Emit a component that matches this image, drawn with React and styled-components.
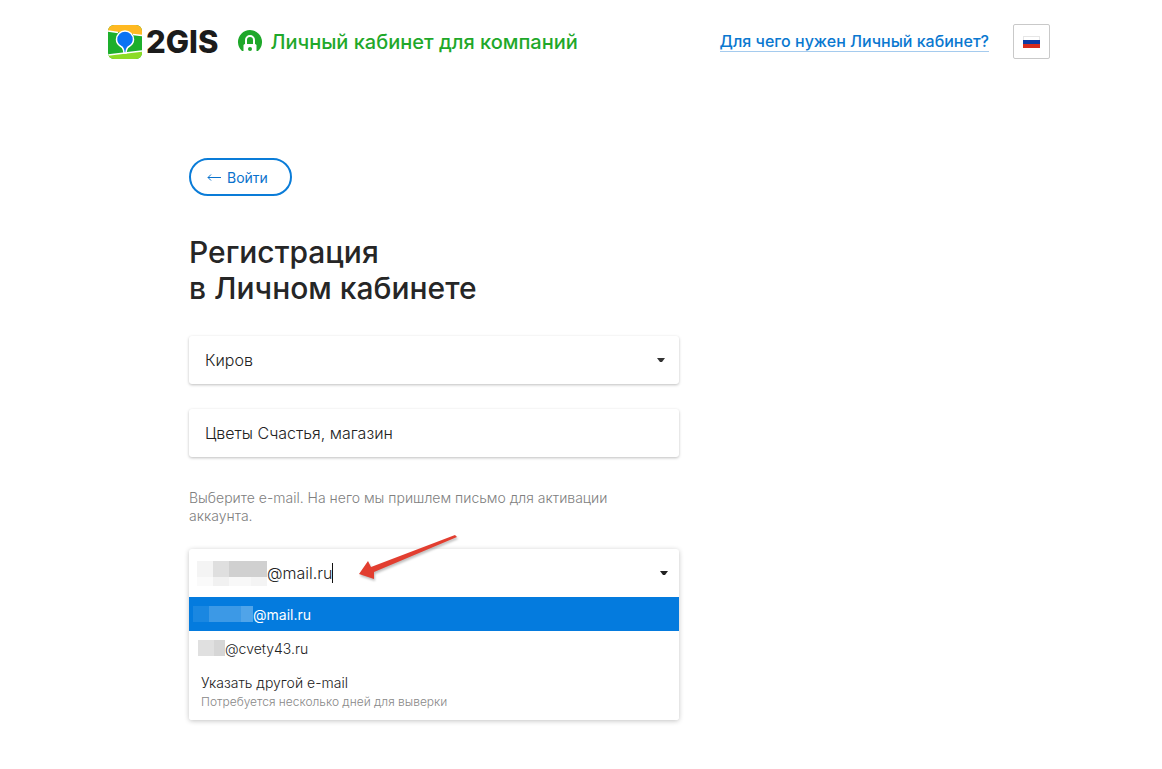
import React, { useState } from 'react';
import styled, { createGlobalStyle } from 'styled-components';

const GlobalStyle = createGlobalStyle`
  * {
    box-sizing: border-box;
  }

  body {
    margin: 0;
    background-color: #fff;
    color: #222;
    font-family: Inter, 'Liberation Sans', sans-serif;
    font-size: 16px;
    font-weight: 300;
  }

  button, input, select {
    font: inherit;
    color: inherit;
  }
`;

const Header = styled.header`
  display: flex;
  align-items: center;
  justify-content: space-between;
  padding: 24px 112px 0 108px;
`;

const Side = styled.div`
  display: flex;
  align-items: center;
  gap: ${({ $gap }) => $gap}px;
`;

const Brand = styled.a`
  display: flex;
  align-items: center;
  gap: 4px;
  color: #1b1b1b;
  font-size: 31px;
  font-weight: 800;
  line-height: 34px;
  text-decoration: none;
`;

const Cabinet = styled.a`
  display: flex;
  align-items: center;
  gap: 8px;
  color: #1fa82a;
  font-size: 20px;
  font-weight: 500;
  line-height: 24px;
  text-decoration: none;
`;

const HelpLink = styled.a`
  border-bottom: 1px solid #a5cbee;
  color: #0a78d0;
  font-size: 16px;
  font-weight: 500;
  line-height: 19px;
  text-decoration: none;
`;

const LanguageButton = styled.button`
  display: flex;
  align-items: center;
  justify-content: center;
  width: 37px;
  height: 35px;
  padding: 0;
  border: 1px solid #c9c9c9;
  border-radius: 2px;
  background-color: #fff;
`;

const Main = styled.main`
  width: 100%;
  max-width: 679px;
  padding: 99px 0 48px 189px;
`;

const BackButton = styled.button`
  display: flex;
  align-items: center;
  gap: 6px;
  height: 38px;
  padding: 0 22px 0 16px;
  border: 2px solid #0a7cd8;
  border-radius: 19px;
  background-color: #fff;
  color: #0a72cc;
  font-size: 14px;
  font-weight: 400;
`;

const Title = styled.h1`
  margin: 38px 0 30px;
  color: #262626;
  font-size: 30px;
  font-weight: 500;
  line-height: 36px;
`;

const Field = styled.div`
  position: relative;
  display: flex;
  align-items: center;
  height: 48px;
  margin-bottom: 25px;
  border-radius: 3px;
  background-color: #fff;
  box-shadow: 0 1px 3px rgba(0, 0, 0, 0.26);
`;

const Select = styled.select`
  width: 100%;
  height: 100%;
  padding: 0 16px;
  border: 0;
  background: none;
  appearance: none;
  outline: none;
`;

const TextInput = styled.input`
  width: 100%;
  height: 100%;
  padding: 0 16px;
  border: 0;
  background: none;
  outline: none;
`;

const SelectArrow = styled.svg`
  position: absolute;
  right: 14px;
  pointer-events: none;
`;

const Hint = styled.label`
  display: block;
  margin: 32px 0 24px;
  padding-right: 60px;
  color: #808080;
  font-size: 14px;
  line-height: 18px;
`;

const ComboWrapper = styled.div`
  position: relative;
`;

const Combo = styled.div`
  border-radius: 3px;
  background-color: #fff;
  box-shadow: 0 1px 5px rgba(0, 0, 0, 0.24);
`;

const ComboHead = styled.div`
  display: flex;
  align-items: center;
  height: 48px;
  padding: 0 11px 0 8px;
`;

const EmailInput = styled.input`
  min-width: 0;
  padding: 0;
  border: 0;
  background: none;
  outline: none;
  caret-color: transparent;
  field-sizing: content;
`;

const Caret = styled.span`
  width: 1px;
  height: 20px;
  background-color: #111;
`;

const ComboToggle = styled.button`
  display: flex;
  margin-left: auto;
  padding: 0;
  border: 0;
  background: none;
`;

const Option = styled.button`
  display: flex;
  align-items: center;
  width: 100%;
  height: 34px;
  padding: 0 0 0 ${({ $indent }) => $indent}px;
  border: 0;
  background-color: ${({ $active }) => ($active ? '#047bde' : '#fff')};
  color: ${({ $active }) => ($active ? '#fff' : '#222')};
  font-size: 14px;
  font-weight: ${({ $active }) => ($active ? 400 : 300)};
  text-align: left;
`;

const OtherOption = styled(Option)`
  flex-direction: column;
  align-items: flex-start;
  height: 55px;
  padding-top: 8px;
  border-radius: 0 0 3px 3px;
  line-height: 20px;
`;

const Note = styled.small`
  color: #888;
  font-size: 12px;
  line-height: 18px;
`;

const Pointer = styled.svg`
  position: absolute;
  top: -16px;
  left: 168px;
  filter: drop-shadow(1px 2px 1px rgba(0, 0, 0, 0.25));
  pointer-events: none;
`;

const Logo = () => (
  <svg width="34" height="34" viewBox="0 0 34 34" aria-hidden="true">
    <defs>
      <clipPath id="logo-shape">
        <rect width="34" height="34" rx="6" />
      </clipPath>
    </defs>
    <g clipPath="url(#logo-shape)">
      <rect width="34" height="34" fill="#1daf2c" />
      <path d="M0 0H34V11L24 9L0 6Z" fill="#ffb921" />
      <path d="M0 30L34 26V34H0Z" fill="#8cdb25" />
      <path d="M0 6L10 7.500M25 9.500L34 10.500" fill="none" stroke="#fff" strokeWidth="1.500" />
      <path d="M0 30L34 26" fill="none" stroke="#fff" strokeWidth="1.500" />
      <path
        d="M17 6A8.500 8.500 0 0 0 8.500 14.500C8.500 18 10.500 20 13 21.500C15.300 22.800 15.800 24 16 28H18C18.200 24 18.700 22.800 21 21.500C23.500 20 25.500 18 25.500 14.500A8.500 8.500 0 0 0 17 6Z"
        fill="#0b73f4"
        stroke="#fff"
        strokeWidth="1.500"
      />
    </g>
  </svg>
);

const LockIcon = () => (
  <svg width="24" height="24" viewBox="0 0 24 24" aria-hidden="true">
    <path d="M4 21A12 12 0 1 1 20 21Z" fill="#1fa82a" />
    <path d="M8 14V10A4 4 0 0 1 16 10V14" fill="none" stroke="#fff" strokeWidth="2" />
    <path d="M5.500 22V15.500Q5.500 14 7 14H17Q18.500 14 18.500 15.500V22Z" fill="#fff" />
    <circle cx="12" cy="19" r="2" fill="#1fa82a" />
  </svg>
);

const Flag = () => (
  <svg width="17" height="12" viewBox="0 0 17 12" aria-hidden="true">
    <path d="M0 0H17V12H0Z" fill="#e6e6e6" />
    <path d="M1 1H16V4H1Z" fill="#fff" />
    <path d="M0 4H17V8H0Z" fill="#0b3ba5" />
    <path d="M0 8H17V12H0Z" fill="#d52b1e" />
  </svg>
);

const BackArrow = () => (
  <svg width="14" height="10" viewBox="0 0 14 10" aria-hidden="true">
    <path d="M4 2.500L1 5.500L4 8.500M1 5.500H14" fill="none" stroke="currentColor" />
  </svg>
);

const TRIANGLE = 'M0 0H8L5 4H3Z';

const Mosaic = ({ width, height, cells }) => (
  <svg width={width} height={height} aria-hidden="true">
    {cells.map(([x, y, w, h, fill]) => (
      <rect key={`${x}-${y}`} x={x} y={y} width={w} height={h} fill={fill} />
    ))}
  </svg>
);

const INPUT_CELLS = [
  [0, 0, 16, 16, '#f4f4f4'],
  [16, 0, 16, 16, '#dfdfdf'],
  [32, 0, 38, 16, '#d0d0d0'],
  [0, 16, 16, 9, '#fafafa'],
  [16, 16, 16, 9, '#f1f1f1'],
  [32, 16, 22, 9, '#f8f8f8'],
  [54, 16, 16, 9, '#f4f4f4'],
];

const ACTIVE_CELLS = [
  [0, 0, 16, 16, '#1a87e1'],
  [16, 0, 32, 16, '#3c99e6'],
  [48, 0, 12, 16, '#50a4e9'],
];

const SECOND_CELLS = [
  [0, 0, 16, 16, '#e0e0e0'],
  [16, 0, 11, 16, '#d6d6d6'],
];

const App = () => {
  const [name, setName] = useState('Цветы Счастья, магазин');
  const [email, setEmail] = useState('@mail.ru');

  return (
    <>
      <GlobalStyle />
      <Header>
        <Side $gap={20}>
          <Brand href="#">
            <Logo />
            2GIS
          </Brand>
          <Cabinet href="#">
            <LockIcon />
            Личный кабинет для компаний
          </Cabinet>
        </Side>
        <Side $gap={24}>
          <HelpLink href="#">Для чего нужен Личный кабинет?</HelpLink>
          <LanguageButton type="button" aria-label="Русский">
            <Flag />
          </LanguageButton>
        </Side>
      </Header>
      <Main>
        <BackButton type="button">
          <BackArrow />
          Войти
        </BackButton>
        <Title>
          Регистрация
          <br />в Личном кабинете
        </Title>
        <Field>
          <Select aria-label="Город" defaultValue="kirov">
            <option value="kirov">Киров</option>
          </Select>
          <SelectArrow width="8" height="4" aria-hidden="true">
            <path d={TRIANGLE} fill="#333" />
          </SelectArrow>
        </Field>
        <Field>
          <TextInput aria-label="Компания" value={name} onChange={e => setName(e.target.value)} />
        </Field>
        <Hint htmlFor="email">Выберите e-mail. На него мы пришлем письмо для активации аккаунта.</Hint>
        <ComboWrapper>
          <Combo>
            <ComboHead>
              <Mosaic width={70} height={25} cells={INPUT_CELLS} />
              <EmailInput id="email" value={email} onChange={e => setEmail(e.target.value)} />
              <Caret />
              <ComboToggle type="button" aria-label="Показать список">
                <svg width="8" height="4" aria-hidden="true">
                  <path d={TRIANGLE} fill="#222" />
                </svg>
              </ComboToggle>
            </ComboHead>
            <Option type="button" $active $indent={4}>
              <Mosaic width={60} height={16} cells={ACTIVE_CELLS} />
              @mail.ru
            </Option>
            <Option type="button" $indent={9}>
              <Mosaic width={27} height={16} cells={SECOND_CELLS} />
              @cvety43.ru
            </Option>
            <OtherOption type="button" $indent={12}>
              Указать другой e-mail
              <Note>Потребуется несколько дней для выверки</Note>
            </OtherOption>
          </Combo>
          <Pointer width="104" height="50" viewBox="0 0 104 50" aria-hidden="true">
            <path d="M2 41L11 28L14 34L98 2L100 4L17 39L17 46Z" fill="#e23e30" />
          </Pointer>
        </ComboWrapper>
      </Main>
    </>
  );
};

export default App;
